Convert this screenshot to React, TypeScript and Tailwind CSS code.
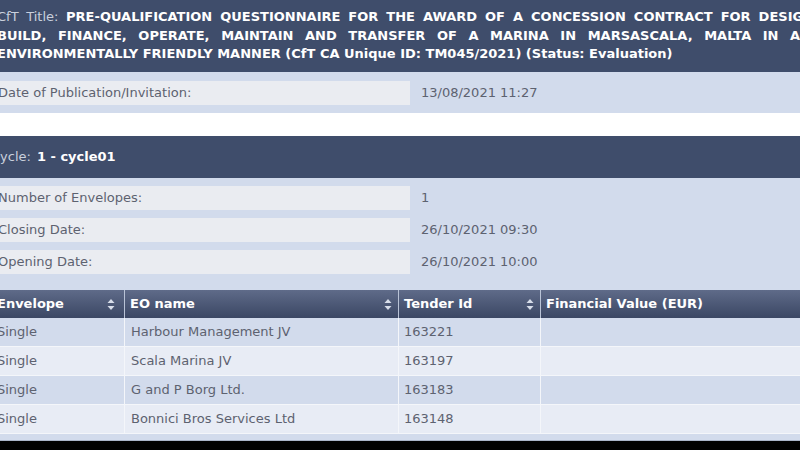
import React from "react";

const font = { fontFamily: '"DejaVu Sans", Verdana, sans-serif' };

function SortIcon() {
  return (
    <svg width="8" height="13" viewBox="0 0 8 13" className="shrink-0">
      <path d="M4 1 L7.5 5 L0.5 5 Z" fill="#d8deea" />
      <path d="M4 12 L7.5 8 L0.5 8 Z" fill="#d8deea" />
    </svg>
  );
}

function InfoRow({ label, value }: { label: string; value: string }) {
  return (
    <div className="flex items-center h-6">
      <div className="w-[413px] h-6 bg-[#eaecf1] flex items-center pl-[1px] text-[#5d6270]">{label}</div>
      <div className="pl-[11px] text-[#5d6270]">{value}</div>
    </div>
  );
}

const rows = [
  ["Single", "Harbour Management JV", "163221"],
  ["Single", "Scala Marina JV", "163197"],
  ["Single", "G and P Borg Ltd.", "163183"],
  ["Single", "Bonnici Bros Services Ltd", "163148"],
];

export default function App() {
  return (
    <div className="w-[800px] h-[450px] bg-black overflow-hidden text-[13px]" style={font}>
      <div className="ml-[-3px] w-[830px] bg-white">
        {/* title */}
        <div className="h-[72px] bg-[#3f4d6b] pt-[8px] leading-[18.5px] text-white font-bold">
          <div className="w-[822px] text-justify [text-align-last:justify]">
            <span className="font-normal text-[#c9d0dd]">CfT Title: </span>
            PRE-QUALIFICATION QUESTIONNAIRE FOR THE AWARD OF A CONCESSION CONTRACT FOR DESIGN,
          </div>
          <div className="w-[814px] text-justify [text-align-last:justify]">
            BUILD, FINANCE, OPERATE, MAINTAIN AND TRANSFER OF A MARINA IN MARSASCALA, MALTA IN AN
          </div>
          <div>ENVIRONMENTALLY FRIENDLY MANNER (CfT CA Unique ID: TM045/2021) (Status: Evaluation)</div>
        </div>

        <div className="bg-[#d2dbec] py-[9px] pb-[8px]">
          <InfoRow label="Date of Publication/Invitation:" value="13/08/2021 11:27" />
        </div>

        <div className="h-[23px] bg-white" />

        <div className="h-[42px] bg-[#3f4d6b] flex items-center text-[#c9d0dd]">
          <span className="ml-[-6px]">Cycle:</span>
          <span className="ml-[6px] font-bold text-white">1 - cycle01</span>
        </div>

        <div className="bg-[#d2dbec] pt-[8px] pb-[16px] flex flex-col gap-2">
          <InfoRow label="Number of Envelopes:" value="1" />
          <InfoRow label="Closing Date:" value="26/10/2021 09:30" />
          <InfoRow label="Opening Date:" value="26/10/2021 10:00" />
        </div>

        {/* table */}
        <div className="bg-[#d2dbec] pb-[6px] border-b border-[#a9b4c8]">
          <div className="grid grid-cols-[128px_274px_142px_1fr] h-[28px] bg-gradient-to-b from-[#5f6b89] to-[#3b4764] text-white font-bold">
            <div className="flex items-center justify-between pr-[9px] border-r border-[#b9c3d6]">
              <span>Envelope</span>
              <SortIcon />
            </div>
            <div className="flex items-center justify-between pl-[5px] pr-[6px] border-r border-[#b9c3d6]">
              <span>EO name</span>
              <SortIcon />
            </div>
            <div className="flex items-center justify-between pl-[5px] pr-[6px] border-r border-[#b9c3d6]">
              <span>Tender Id</span>
              <SortIcon />
            </div>
            <div className="flex items-center pl-[5px]">
              <span>Financial Value (EUR)</span>
            </div>
          </div>
          {rows.map((r, i) => (
            <div
              key={i}
              className={`grid grid-cols-[128px_274px_142px_1fr] h-[29px] border-b border-[#f4f6fa] text-[#5d6270] ${
                i % 2 === 0 ? "bg-[#d2dbec]" : "bg-[#e8ecf5]"
              }`}
            >
              <div className="flex items-center border-r border-[#f4f6fa]">{r[0]}</div>
              <div className="flex items-center pl-[6px] border-r border-[#f4f6fa]">{r[1]}</div>
              <div className="flex items-center pl-[5px] border-r border-[#f4f6fa]">{r[2]}</div>
              <div />
            </div>
          ))}
        </div>
      </div>
    </div>
  );
}
